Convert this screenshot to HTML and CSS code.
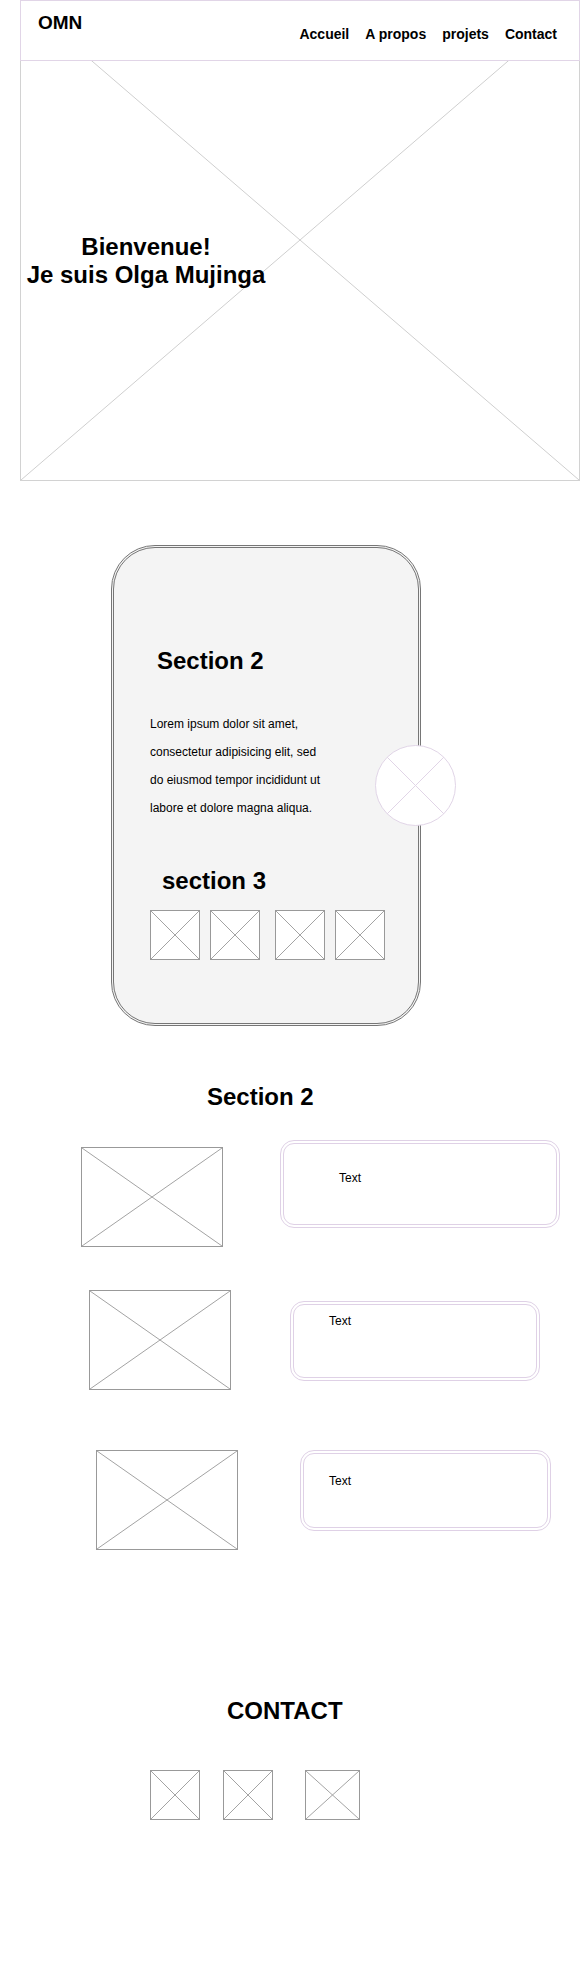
FILE: index.html
```html
<!DOCTYPE html>
<html>
<head>
	<meta charset="utf-8">
	<link rel="stylesheet" href="styles.css">
	<title>OMN</title>
</head>
<body>
	<!-- top : header over the hero picture -->
	<div class="top">
		<div class="hero">
			<svg class="hero-cross" viewBox="0 0 100 100" preserveAspectRatio="none"><path d="M0 0L100 100M100 0L0 100"/></svg>
			<h1 class="hero-title">Bienvenue!<br>Je suis Olga Mujinga</h1>
		</div>
		<div class="header">
			<div class="logo">OMN</div>
			<nav class="nav">
				<a href="#">Accueil</a>
				<a href="#">A propos</a>
				<a href="#">projets</a>
				<a href="#">Contact</a>
			</nav>
		</div>
	</div>

	<!-- phone card -->
	<div class="card">
		<h2 class="card-title">Section 2</h2>
		<p class="card-text">
			Lorem ipsum dolor sit amet,<br>
			consectetur adipisicing elit, sed<br>
			do eiusmod tempor incididunt ut<br>
			labore et dolore magna aliqua.
		</p>
		<h2 class="card-sub">section 3</h2>
		<div class="thumbs">
			<div class="thumb-group">
				<div class="ph thumb"><svg viewBox="0 0 100 100" preserveAspectRatio="none"><path d="M0 0L100 100M100 0L0 100"/></svg></div>
				<div class="ph thumb"><svg viewBox="0 0 100 100" preserveAspectRatio="none"><path d="M0 0L100 100M100 0L0 100"/></svg></div>
			</div>
			<div class="thumb-group">
				<div class="ph thumb"><svg viewBox="0 0 100 100" preserveAspectRatio="none"><path d="M0 0L100 100M100 0L0 100"/></svg></div>
				<div class="ph thumb"><svg viewBox="0 0 100 100" preserveAspectRatio="none"><path d="M0 0L100 100M100 0L0 100"/></svg></div>
			</div>
		</div>
		<div class="card-badge">
			<svg viewBox="0 0 81 81"><circle cx="40.5" cy="40.5" r="40"/><path d="M12.2 12.2L68.8 68.8M68.8 12.2L12.2 68.8"/></svg>
		</div>
	</div>

	<!-- section 2 -->
	<h2 class="section-title">Section 2</h2>

	<div class="row row-1">
		<div class="ph pic"><svg viewBox="0 0 100 100" preserveAspectRatio="none"><path d="M0 0L100 100M100 0L0 100"/></svg></div>
		<div class="text-box">Text</div>
	</div>
	<div class="row row-2">
		<div class="ph pic"><svg viewBox="0 0 100 100" preserveAspectRatio="none"><path d="M0 0L100 100M100 0L0 100"/></svg></div>
		<div class="text-box">Text</div>
	</div>
	<div class="row row-3">
		<div class="ph pic"><svg viewBox="0 0 100 100" preserveAspectRatio="none"><path d="M0 0L100 100M100 0L0 100"/></svg></div>
		<div class="text-box">Text</div>
	</div>

	<!-- contact -->
	<h2 class="contact-title">CONTACT</h2>
	<div class="contact-icons">
		<div class="ph icon"><svg viewBox="0 0 100 100" preserveAspectRatio="none"><path d="M0 0L100 100M100 0L0 100"/></svg></div>
		<div class="ph icon"><svg viewBox="0 0 100 100" preserveAspectRatio="none"><path d="M0 0L100 100M100 0L0 100"/></svg></div>
		<div class="ph icon icon-wide"><svg viewBox="0 0 100 100" preserveAspectRatio="none"><path d="M0 0L100 100M100 0L0 100"/></svg></div>
	</div>
</body>
</html>
```

FILE: styles.css
```css
* {
	box-sizing: border-box;
}

body {
	margin: 0;
	min-height: 1981px;
	background: #fff;
	color: #000;
	font-family: "Liberation Sans", Arial, sans-serif;
}

h1, h2, p {
	margin: 0;
}

/* placeholders (box with a cross) */
.ph {
	border: 1px solid #999;
	background: #fff;
}
.ph svg {
	display: block;
	width: 100%;
	height: 100%;
}
.ph path {
	fill: none;
	stroke: #a3a3a3;
	stroke-width: 1;
	vector-effect: non-scaling-stroke;
}

/* top */
.top {
	position: relative;
	width: 560px;
	margin-left: 20px;
}

.hero {
	position: relative;
	height: 481px;
	border: 1px solid #d2d2d2;
	border-top: 0;
}
.hero-cross {
	position: absolute;
	top: 0;
	left: 0;
	width: 100%;
	height: 100%;
}
.hero-cross path {
	fill: none;
	stroke: #cfcfcf;
	stroke-width: 1;
	vector-effect: non-scaling-stroke;
}
.hero-title {
	position: relative;
	width: 250px;
	padding-top: 233px;
	font-size: 24px;
	line-height: 28px;
	font-weight: bold;
	text-align: center;
}

.header {
	position: absolute;
	top: 0;
	left: 0;
	right: 0;
	height: 61px;
	display: flex;
	align-items: flex-start;
	background: #fff;
	border: 1px solid #e1d5e7;
}
.logo {
	margin: 11px 0 0 17px;
	font-size: 19px;
	line-height: 22px;
	font-weight: bold;
}
.nav {
	display: flex;
	gap: 16px;
	margin: 25px 22px 0 auto;
}
.nav a {
	color: #000;
	text-decoration: none;
	font-size: 14px;
	line-height: 16px;
	font-weight: bold;
}

/* phone card */
.card {
	position: relative;
	width: 310px;
	height: 481px;
	margin: 64px 0 0 111px;
	padding: 99px 0 0 36px;
	background: #f4f4f4;
	border: 3px double #767676;
	border-radius: 44px;
}
.card-title, .card-sub {
	font-size: 24px;
	line-height: 28px;
	font-weight: bold;
}
.card-title {
	margin-left: 7px;
}
.card-text {
	margin-top: 35px;
	font-size: 12px;
	line-height: 28px;
}
.card-sub {
	margin: 45px 0 0 12px;
}
.thumbs {
	display: flex;
	gap: 15px;
	margin-top: 15px;
}
.thumb-group {
	display: flex;
	gap: 10px;
}
.thumb {
	width: 50px;
	height: 50px;
}
.card-badge {
	position: absolute;
	left: 261px;
	top: 197px;
	width: 81px;
	height: 81px;
}
.card-badge svg {
	display: block;
	width: 81px;
	height: 81px;
}
.card-badge circle {
	fill: #fff;
	stroke: #e1d5e7;
	stroke-width: 1;
}
.card-badge path {
	stroke: #e1d5e7;
	stroke-width: 1;
}

/* section 2 */
.section-title, .contact-title {
	font-size: 24px;
	line-height: 28px;
	font-weight: bold;
}
.section-title {
	margin: 57px 0 0 207px;
}

.row {
	display: flex;
	align-items: flex-start;
}
.pic {
	width: 142px;
	height: 100px;
}
.text-box {
	font-size: 12px;
	line-height: 14px;
	border: 4px double #dfd1e6;
	border-radius: 14px;
	background: #fff;
}

.row-1 {
	margin-top: 29px;
	padding-left: 81px;
	gap: 57px;
}
.row-1 .pic {
	margin-top: 7px;
}
.row-1 .text-box {
	width: 280px;
	height: 88px;
	padding: 27px 0 0 55px;
}

.row-2 {
	margin-top: 43px;
	padding-left: 89px;
	gap: 59px;
}
.row-2 .text-box {
	width: 250px;
	height: 80px;
	margin-top: 11px;
	padding: 9px 0 0 35px;
}

.row-3 {
	margin-top: 60px;
	padding-left: 96px;
	gap: 62px;
}
.row-3 .text-box {
	width: 251px;
	height: 81px;
	padding: 20px 0 0 25px;
}

/* contact */
.contact-title {
	margin: 147px 0 0 227px;
}
.contact-icons {
	display: flex;
	margin: 45px 0 0 150px;
}
.icon {
	width: 50px;
	height: 50px;
}
.icon + .icon {
	margin-left: 23px;
}
.icon-wide {
	width: 55px;
}
.icon + .icon-wide {
	margin-left: 32px;
}
```
